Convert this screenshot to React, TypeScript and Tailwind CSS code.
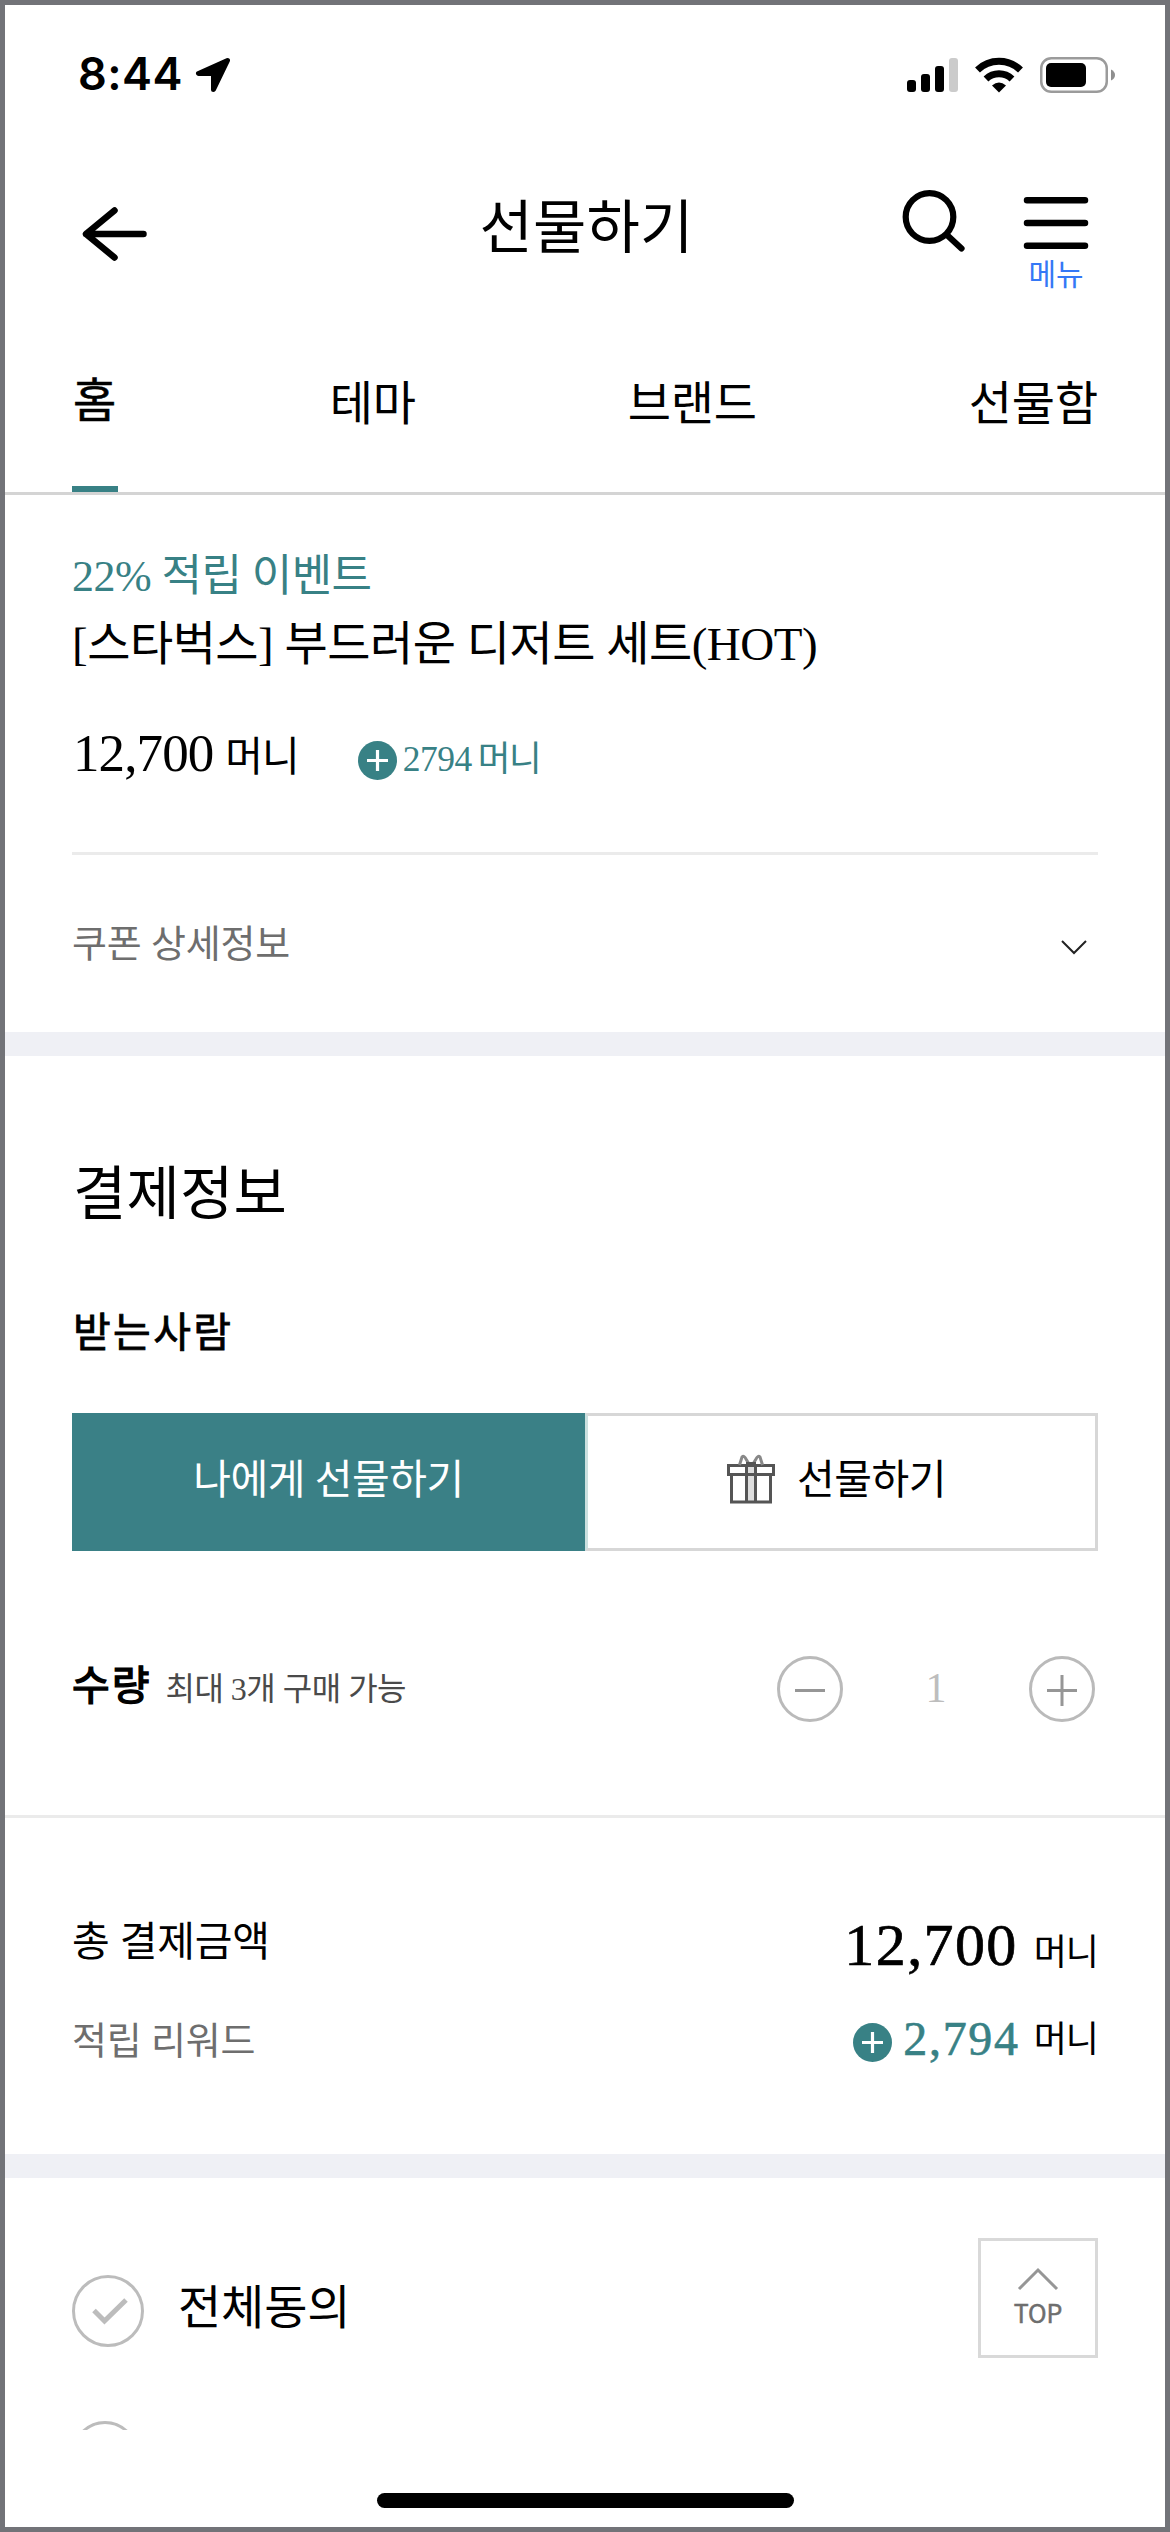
import { useState } from 'react';

const tabs = ['홈', '테마', '브랜드', '선물함'];

function StatusBar() {
  return (
    <div className="h-[140px] shrink-0 flex items-center justify-between pl-[73px] pr-[49px]">
      <div className="flex items-center gap-[12px]">
        <span className="pb-[3px] font-['Inter',sans-serif] font-semibold text-[45px] leading-none tracking-[0.01em]">8:44</span>
        <svg width="36" height="36" viewBox="0 0 36 36" fill="#000" stroke="#000" strokeWidth="5" strokeLinejoin="round">
          <path d="M3.500 16.500H18.500V32.500L32.500 3.500Z" />
        </svg>
      </div>
      <div className="flex items-center">
        <svg width="52" height="36" viewBox="0 0 52 36">
          <rect x="0" y="23" width="9" height="12" rx="3" />
          <rect x="14" y="17" width="9" height="18" rx="3" />
          <rect x="28" y="9" width="9" height="26" rx="3" />
          <rect x="42" y="1" width="9" height="34" rx="3" fill="#cbcbcb" />
        </svg>
        <svg className="ml-[16px]" width="48" height="36" viewBox="0 0 48 36">
          <path d="M2.500 13A31 31 0 0 1 45.500 13" fill="none" stroke="#000" strokeWidth="7" />
          <path d="M11 22A19 19 0 0 1 37 22" fill="none" stroke="#000" strokeWidth="7" />
          <path d="M17 28.500Q24 22.500 31 28.500L24 35.500Z" />
        </svg>
        <svg className="ml-[17px]" width="76" height="36" viewBox="0 0 76 36">
          <rect x="1.250" y="1.250" width="65.500" height="33.500" rx="10" fill="none" stroke="#9b9b9b" strokeWidth="2.500" />
          <rect x="6" y="6" width="40" height="24" rx="5" />
          <path d="M71 12.500Q75 14.500 75 18Q75 21.500 71 23.500Z" fill="#8f8f8f" />
        </svg>
      </div>
    </div>
  );
}

function Header() {
  return (
    <header className="h-[170px] shrink-0 grid grid-cols-[1fr_auto_1fr] items-start px-[76px]">
      <button className="mt-[62px] w-[68px]" aria-label="뒤로">
        <svg width="68" height="54" viewBox="0 0 68 54" fill="none" stroke="#000" strokeWidth="6.500" strokeLinecap="round" strokeLinejoin="round">
          <path d="M62.500 27H5L33.500 3.500M5 27L33.500 50.500" />
        </svg>
      </button>
      <h1 className="mt-[49px] pl-[3px] text-[58px] leading-[70px] tracking-[0.1px]">선물하기</h1>
      <div className="flex items-start justify-end">
        <button className="mt-[44px]" aria-label="검색">
          <svg width="64" height="64" viewBox="0 0 64 64" fill="none" stroke="#000" strokeWidth="6.200" strokeLinecap="round">
            <circle cx="28.500" cy="28" r="23.800" />
            <path d="M46 46L60.500 59.500" />
          </svg>
        </button>
        <button className="ml-[58px] mt-[51px] flex flex-col items-center" aria-label="메뉴 열기">
          <svg width="66" height="54" viewBox="0 0 66 54" stroke="#000" strokeWidth="6.500" strokeLinecap="round">
            <path d="M4 4.300H62M4 27H62M4 49.700H62" />
          </svg>
          <span className="mt-[9px] text-[30px] leading-[32px] text-[#3478f6]">메뉴</span>
        </button>
      </div>
    </header>
  );
}

function Tabs() {
  const [active, setActive] = useState('홈');
  return (
    <nav className="h-[180px] shrink-0 flex justify-between px-[67px] border-b-[3px] border-[#d4d4d4]">
      {tabs.map((tab) => (
        <button
          key={tab}
          onClick={() => setActive(tab)}
          className={`min-w-[46px] flex flex-col justify-between ${tab === active ? 'pt-[56px]' : 'pt-[59px]'}`}
        >
          <span className={`text-[47px] leading-[60px] ${tab === active ? 'pr-px [-webkit-text-stroke:0.6px_black]' : ''}`}>{tab}</span>
          {tab === active && <span className="h-[6px] w-full bg-[#388185]" />}
        </button>
      ))}
    </nav>
  );
}

function PlusBadge({ className }: { className?: string }) {
  return (
    <svg className={className} width="39" height="39" viewBox="0 0 39 39">
      <circle cx="19.500" cy="19.500" r="19.500" fill="#388185" />
      <path d="M9 19.500H30M19.500 9V30" stroke="#fff" strokeWidth="3.200" />
    </svg>
  );
}

function Product() {
  return (
    <section className="h-[537px] shrink-0 px-[67px] pt-[52px]">
      <p className="text-[44px] leading-[60px] tracking-[-0.55px] text-[#388185]">22% 적립 이벤트</p>
      <h2 className="text-[47px] leading-[75px] tracking-[-0.5px]">[스타벅스] 부드러운 디저트 세트(HOT)</h2>
      <div className="mt-[41px] h-[60px] flex items-baseline">
        <span className="pl-px text-[53px] leading-[60px] tracking-[-0.9px]">12,700</span>
        <span className="ml-[12px] text-[41px] leading-[60px] tracking-[-1px]">머니</span>
        <span className="ml-[59px] h-[60px] flex items-baseline text-[#388185]">
          <PlusBadge className="self-start mt-[12px]" />
          <span className="ml-[6px] text-[35.500px] leading-[60px] tracking-[-0.5px]">2794</span>
          <span className="ml-[6px] text-[35.500px] leading-[60px] tracking-[-1.5px]">머니</span>
        </span>
      </div>
      <button className="mt-[69px] h-[180px] w-full flex items-center justify-between border-t-[3px] border-[#ebebeb] pr-[10px]">
        <span className="text-[38px] leading-[50px] text-[#6e6e6e]">쿠폰 상세정보</span>
        <svg className="mt-[6px]" width="28" height="16" viewBox="0 0 28 16" fill="none" stroke="#222" strokeWidth="2">
          <path d="M2 2L14 14L26 2" />
        </svg>
      </button>
    </section>
  );
}

function GiftIcon() {
  return (
    <svg className="-mt-[2px]" width="48" height="50" viewBox="0 0 48 50" fill="none" stroke="#555" strokeWidth="3">
      <rect x="19.500" y="11" width="9" height="37" fill="#dedede" stroke="none" />
      <path d="M1.500 11.500H46.500V20.500H1.500ZM4.500 20.500H43.500V48H4.500ZM19.500 11.500V48M28.500 11.500V48" />
      <path d="M12.500 11L15 3Q17 1 19 5L22 10M35.500 11L33 3Q31 1 29 5L26 10" stroke="#888" />
      <path d="M19 10H29" strokeWidth="4" />
    </svg>
  );
}

function Payment() {
  const [count, setCount] = useState(1);
  return (
    <section className="h-[762px] shrink-0 px-[67px] pt-[104px] border-b-[3px] border-[#ebebeb]">
      <h2 className="pl-px text-[58px] leading-[70px] tracking-[0.1px]">결제정보</h2>
      <h3 className="mt-[78px] pl-px text-[41px] leading-[50px] tracking-[2.400px] [-webkit-text-stroke:0.8px_black]">받는사람</h3>
      <div className="mt-[55px] h-[138px] grid grid-cols-2 text-[41px] leading-[50px] tracking-[-0.5px]">
        <button className="bg-[#3a8086] text-white pb-[4px]">나에게 선물하기</button>
        <button className="flex items-center justify-center gap-[22px] border-[3px] border-l-[#cbe0df] border-[#d7d7d7] pb-[4px] pr-[10px]">
          <GiftIcon />
          <span>선물하기</span>
        </button>
      </div>
      <div className="mt-[105px] h-[66px] flex items-center justify-between pr-[3px]">
        <div className="flex items-baseline pb-[4px]">
          <span className="text-[41px] leading-[50px] tracking-[2px] [-webkit-text-stroke:1.4px_black]">수량</span>
          <span className="ml-[14px] text-[32px] leading-[50px] tracking-[-0.5px] text-[#4a4a4a]">최대 3개 구매 가능</span>
        </div>
        <div className="flex items-center justify-between w-[318px]">
          <button aria-label="빼기" onClick={() => setCount(Math.max(1, count - 1))}>
            <svg width="66" height="66" viewBox="0 0 66 66" fill="none" stroke="#bababa" strokeWidth="3">
              <circle cx="33" cy="33" r="31.500" />
              <path d="M18 34.500H48" stroke="#969696" />
            </svg>
          </button>
          <span className="pb-[2px] text-[42px] leading-[64px] text-[#bdbdbd]">{count}</span>
          <button aria-label="더하기" onClick={() => setCount(Math.min(3, count + 1))}>
            <svg width="66" height="66" viewBox="0 0 66 66" fill="none" stroke="#bababa" strokeWidth="3">
              <circle cx="33" cy="33" r="31.500" />
              <path d="M18 34.500H48M33 19V50" stroke="#969696" />
            </svg>
          </button>
        </div>
      </div>
    </section>
  );
}

function Totals() {
  return (
    <section className="h-[336px] shrink-0 px-[67px] pt-[94px] leading-[60px]">
      <div className="h-[60px] flex justify-between">
        <span className="text-[41px]">총 결제금액</span>
        <span className="mt-[3px] flex items-baseline">
          <span className="text-[60px] tracking-[1.400px] [-webkit-text-stroke:0.7px_black]">12,700</span>
          <span className="ml-[16px] text-[36px] tracking-[-1px]">머니</span>
        </span>
      </div>
      <div className="mt-[37px] h-[63px] flex justify-between">
        <span className="mt-[2px] text-[38px] text-[#6e6e6e]">적립 리워드</span>
        <span className="flex items-start">
          <PlusBadge className="mt-[14px]" />
          <span className="ml-[11px] text-[48px] tracking-[1.700px] text-[#388185] [-webkit-text-stroke:0.6px_#388185]">2,794</span>
          <span className="ml-[14px] mt-px text-[36px] tracking-[-1px]">머니</span>
        </span>
      </div>
    </section>
  );
}

function Agreement() {
  return (
    <section className="relative h-[252px] shrink-0 overflow-hidden px-[67px] pt-[97px]">
      <label className="flex items-center">
        <svg width="72" height="72" viewBox="0 0 72 72" fill="none" stroke="#bcbcbc" strokeWidth="3">
          <circle cx="36" cy="36" r="34.500" />
          <path d="M22 35.500L32.500 46L54 25" strokeWidth="5" />
        </svg>
        <span className="ml-[34px] pb-[6px] text-[47px] leading-[60px]">전체동의</span>
      </label>
      <svg className="mt-[74px]" width="66" height="66" viewBox="0 0 66 66" fill="none" stroke="#bcbcbc" strokeWidth="3">
        <circle cx="33" cy="33" r="31.500" />
      </svg>
      {/* Scroll-to-top floats over the list */}
      <button className="absolute right-[67px] top-[60px] w-[120px] h-[120px] flex flex-col items-center border-[3px] border-[#d9d9d9] bg-white text-[#6e6e6e]">
        <svg className="mt-[26px]" width="42" height="24" viewBox="0 0 42 24" fill="none" stroke="#969696" strokeWidth="3">
          <path d="M2 22L21 3L40 22" />
        </svg>
        <span className="mt-[5px] font-['Noto_Sans_CJK_KR',sans-serif] text-[25px] leading-[32px] tracking-normal [-webkit-text-stroke:0.5px_#6e6e6e]">TOP</span>
      </button>
    </section>
  );
}

export default function App() {
  return (
    <div className="w-[1170px] h-[2532px] flex flex-col overflow-hidden border-[5px] border-[#727378] bg-white text-black tracking-[-0.01em] font-['Liberation_Serif','Noto_Sans_CJK_KR',serif]">
      <StatusBar />
      <Header />
      <Tabs />
      <Product />
      <div className="h-[24px] shrink-0 bg-[#eff0f5]" />
      <Payment />
      <Totals />
      <div className="h-[24px] shrink-0 bg-[#eff0f5]" />
      <Agreement />
      <div className="flex justify-center pt-[63px]">
        <div className="h-[15px] w-[417px] rounded-full bg-black" />
      </div>
    </div>
  );
}
